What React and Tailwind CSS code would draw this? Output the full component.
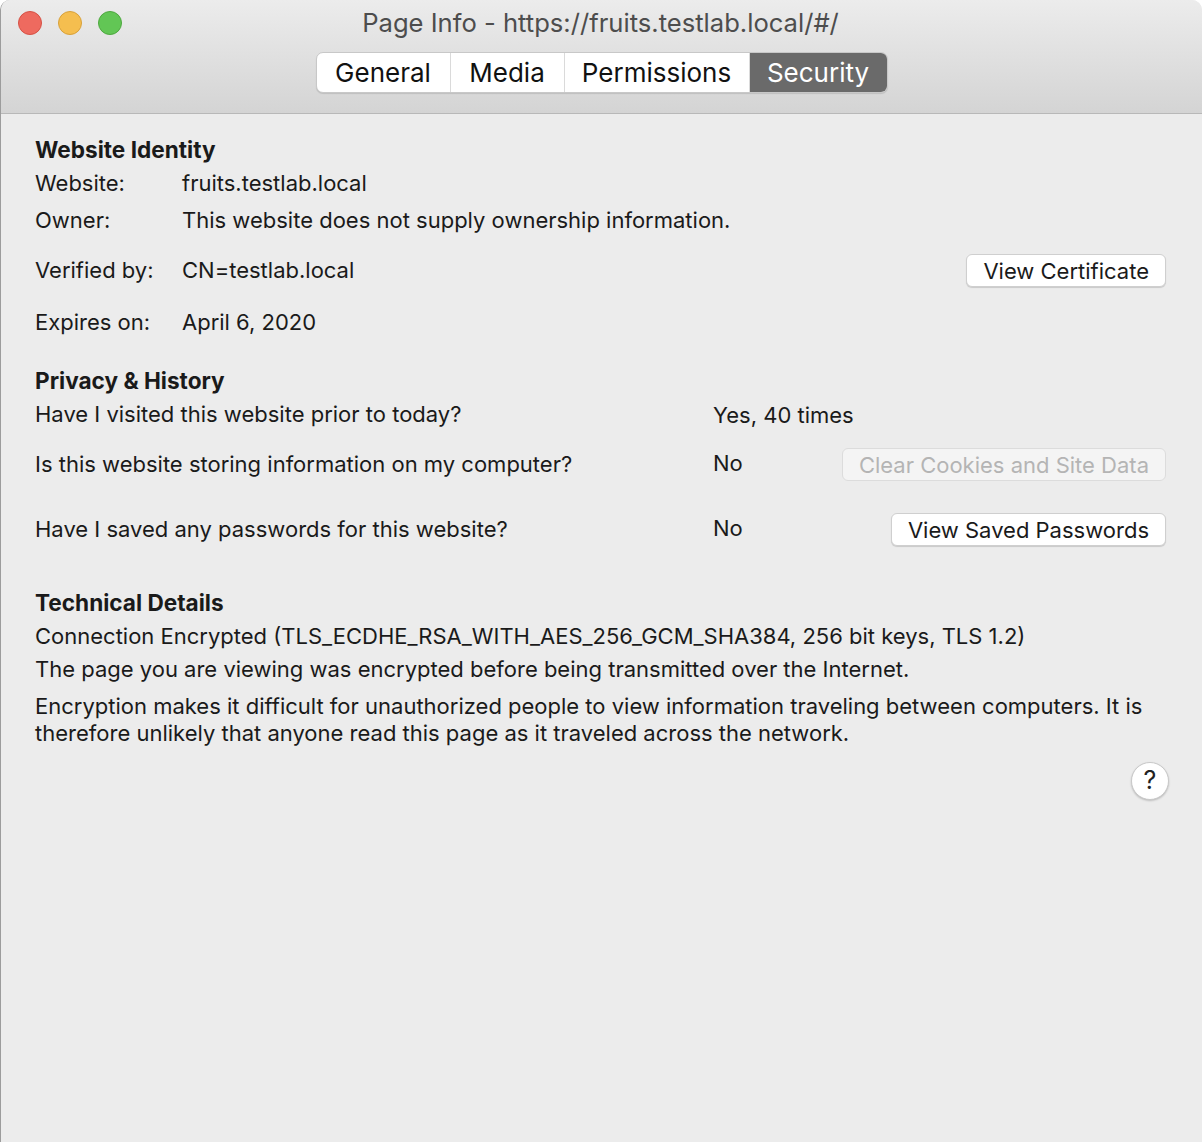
import React from 'react';

const tabs = [
    { name: 'General', w: 'w-[133px]' },
    { name: 'Media', w: 'w-[114px]' },
    { name: 'Permissions', w: 'w-[185px]' },
    { name: 'Security', w: 'w-[138px]' },
];

const MacButton = ({ children, disabled, className = '' }) => (
    <button
        disabled={disabled}
        className={`h-[33px] px-[16px] rounded-[6px] text-[22px] leading-none border ${
            disabled
                ? 'bg-[#f4f4f4] border-[#dcdcdc] text-[#b4b4b4]'
                : 'bg-white border-[#cfcfcf] text-[#1a1a1a] shadow-[0_1px_1px_rgba(0,0,0,0.15)]'
        } ${className}`}
    >
        {children}
    </button>
);

const Row = ({ label, children, className = '' }) => (
    <div className={`flex items-center h-[26px] ${className}`}>
        <span className="w-[147px] shrink-0">{label}</span>
        <span>{children}</span>
    </div>
);

const App = () => {
    return (
        <div className="w-[1202px] h-[1142px] bg-[#ececec] rounded-t-[10px] border-l border-[#9c9c9c] overflow-hidden text-[#1a1a1a] font-['Inter','Liberation_Sans',sans-serif]">
            {/* Title bar */}
            <div className="h-[114px] bg-gradient-to-b from-[#ececec] to-[#d4d4d4] border-b border-[#b8b8b8] flex flex-col">
                <div className="h-[46px] grid grid-cols-[1fr_auto_1fr] items-center">
                    <div className="flex items-center gap-[16px] pl-[17px]">
                        <span className="w-[24px] h-[24px] rounded-full bg-[#ee6a5f] border border-[#d65145]" />
                        <span className="w-[24px] h-[24px] rounded-full bg-[#f5be4f] border border-[#d8a13a]" />
                        <span className="w-[24px] h-[24px] rounded-full bg-[#62c655] border border-[#4ea83f]" />
                    </div>
                    <span className="text-[25.6px] text-[#4d4d4d] pr-[2px]">Page Info - https://fruits.testlab.local/#/</span>
                    <div />
                </div>
                <div className="flex justify-center mt-[6px]">
                    <div className="flex h-[41px] rounded-[7px] border border-[#c8c8c8] bg-white shadow-[0_1px_1px_rgba(0,0,0,0.12)] overflow-hidden">
                        {tabs.map((t, i) => (
                            <div
                                key={t.name}
                                className={`${t.w} flex items-center justify-center text-[26px] ${
                                    i > 0 ? 'border-l border-[#dadada]' : ''
                                } ${t.name === 'Security' ? 'bg-[#6a6a6a] text-white border-[#6a6a6a]' : 'text-[#111]'}`}
                            >
                                {t.name}
                            </div>
                        ))}
                    </div>
                </div>
            </div>

            {/* Content */}
            <div className="pl-[34px] pr-[36px] pt-[23px] text-[22px]">
                <div className="h-[26px] flex items-center font-bold text-[22.6px]">Website Identity</div>
                <Row label="Website:" className="mt-[7px]">fruits.testlab.local</Row>
                <Row label="Owner:" className="mt-[11px]">This website does not supply ownership information.</Row>
                <div className="flex items-center h-[33px] mt-[21px]">
                    <span className="w-[147px] shrink-0">Verified by:</span>
                    <span className="flex-1">CN=testlab.local</span>
                    <MacButton>View Certificate</MacButton>
                </div>
                <Row label="Expires on:" className="mt-[22px]">April 6, 2020</Row>

                <div className="h-[26px] flex items-center font-bold text-[22.6px] mt-[33px]">Privacy &amp; History</div>
                <div className="flex items-center h-[26px] mt-[7px]">
                    <span className="w-[678px] shrink-0">Have I visited this website prior to today?</span>
                    <span className="mt-[3px]">Yes, 40 times</span>
                </div>
                <div className="flex items-center h-[33px] mt-[21px]">
                    <span className="w-[678px] shrink-0">Is this website storing information on my computer?</span>
                    <span className="flex-1 -mt-[2px]">No</span>
                    <MacButton disabled>Clear Cookies and Site Data</MacButton>
                </div>
                <div className="flex items-center h-[33px] mt-[32px]">
                    <span className="w-[678px] shrink-0">Have I saved any passwords for this website?</span>
                    <span className="flex-1 -mt-[2px]">No</span>
                    <MacButton>View Saved Passwords</MacButton>
                </div>

                <div className="h-[26px] flex items-center font-bold text-[22.6px] mt-[44px]">Technical Details</div>
                <div className="h-[26px] flex items-center mt-[7px]">
                    Connection Encrypted (TLS_ECDHE_RSA_WITH_AES_256_GCM_SHA384, 256 bit keys, TLS 1.2)
                </div>
                <div className="h-[26px] flex items-center mt-[7px]">
                    The page you are viewing was encrypted before being transmitted over the Internet.
                </div>
                <p className="leading-[27px] mt-[11px] whitespace-nowrap">
                    Encryption makes it difficult for unauthorized people to view information traveling between computers. It is
                    <br />
                    therefore unlikely that anyone read this page as it traveled across the network.
                </p>

                <div className="flex justify-end mt-[15px] -mr-[3px]">
                    <button className="w-[38px] h-[38px] rounded-full bg-white border border-[#c9c9c9] shadow-[0_1px_2px_rgba(0,0,0,0.2)] flex items-center justify-center text-[25px] text-[#222]">
                        ?
                    </button>
                </div>
            </div>
        </div>
    );
};

export default App;
